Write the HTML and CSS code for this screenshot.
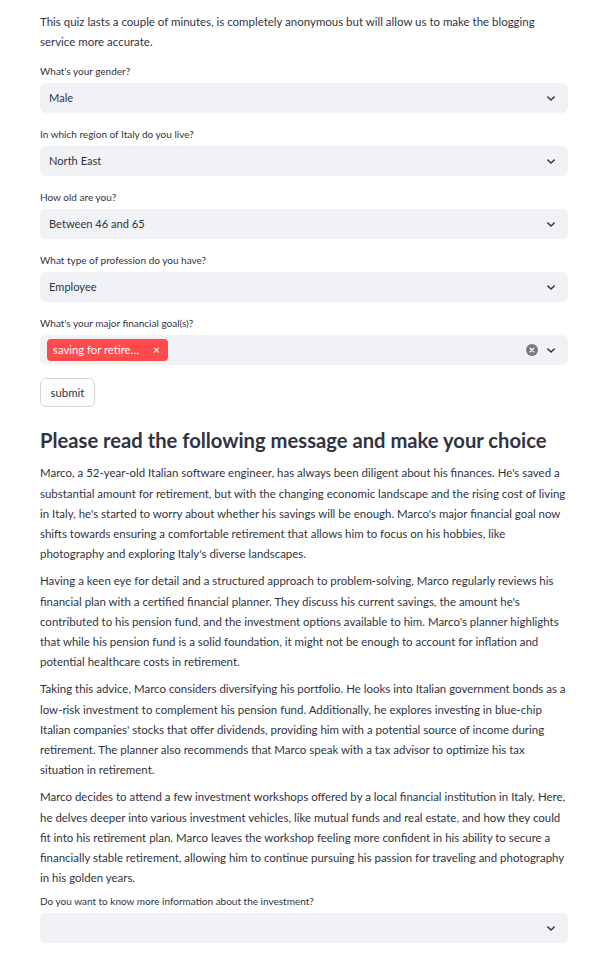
FILE: index.html
```html
<!DOCTYPE html>
<html lang="en">
<head>
<meta charset="utf-8">
<title>Quiz</title>
<link rel="stylesheet" href="styles.css">
</head>
<body>
<main class="page">
  <p class="intro">This quiz lasts a couple of minutes, is completely anonymous but will allow us to make the blogging service more accurate.</p>

  <div class="field">
    <label class="label">What's your gender?</label>
    <div class="select"><span class="value">Male</span><span class="icons"><svg class="chev" viewBox="0 0 10 6"><path d="M1 1l4 4 4-4"/></svg></span></div>
  </div>

  <div class="field">
    <label class="label">In which region of Italy do you live?</label>
    <div class="select"><span class="value">North East</span><span class="icons"><svg class="chev" viewBox="0 0 10 6"><path d="M1 1l4 4 4-4"/></svg></span></div>
  </div>

  <div class="field">
    <label class="label">How old are you?</label>
    <div class="select"><span class="value">Between 46 and 65</span><span class="icons"><svg class="chev" viewBox="0 0 10 6"><path d="M1 1l4 4 4-4"/></svg></span></div>
  </div>

  <div class="field">
    <label class="label">What type of profession do you have?</label>
    <div class="select"><span class="value">Employee</span><span class="icons"><svg class="chev" viewBox="0 0 10 6"><path d="M1 1l4 4 4-4"/></svg></span></div>
  </div>

  <div class="field">
    <label class="label">What's your major financial goal(s)?</label>
    <div class="select multi">
      <span class="tag"><span class="tag-text">saving for retire…</span><span class="tag-x">×</span></span>
      <span class="icons">
        <svg class="clear" viewBox="0 0 12 12"><circle cx="6" cy="6" r="6"/><path d="M4.2 4.2l3.6 3.6M7.8 4.2l-3.6 3.6"/></svg>
        <svg class="chev" viewBox="0 0 10 6"><path d="M1 1l4 4 4-4"/></svg>
      </span>
    </div>
  </div>

  <button class="btn">submit</button>

  <h3 class="heading">Please read the following message and make your choice</h3>

  <p class="para">Marco, a 52-year-old Italian software engineer, has always been diligent about his finances. He's saved a substantial amount for retirement, but with the changing economic landscape and the rising cost of living in Italy, he's started to worry about whether his savings will be enough. Marco's major financial goal now shifts towards ensuring a comfortable retirement that allows him to focus on his hobbies, like photography and exploring Italy's diverse landscapes.</p>

  <p class="para">Having a keen eye for detail and a structured approach to problem-solving, Marco regularly reviews his financial plan with a certified financial planner. They discuss his current savings, the amount he's contributed to his pension fund, and the investment options available to him. Marco's planner highlights that while his pension fund is a solid foundation, it might not be enough to account for inflation and potential healthcare costs in retirement.</p>

  <p class="para">Taking this advice, Marco considers diversifying his portfolio. He looks into Italian government bonds as a low-risk investment to complement his pension fund. Additionally, he explores investing in blue-chip Italian companies' stocks that offer dividends, providing him with a potential source of income during retirement. The planner also recommends that Marco speak with a tax advisor to optimize his tax situation in retirement.</p>

  <p class="para final">Marco decides to attend a few investment workshops offered by a local financial institution in Italy. Here, he delves deeper into various investment vehicles, like mutual funds and real estate, and how they could fit into his retirement plan. Marco leaves the workshop feeling more confident in his ability to secure a financially stable retirement, allowing him to continue pursuing his passion for traveling and photography in his golden years.</p>

  <div class="field">
    <label class="label">Do you want to know more information about the investment?</label>
    <div class="select"><span class="value"></span><span class="icons"><svg class="chev" viewBox="0 0 10 6"><path d="M1 1l4 4 4-4"/></svg></span></div>
  </div>
</main>
</body>
</html>
```

FILE: styles.css
```css
html, body {
  margin: 0;
  padding: 0;
  background: #ffffff;
}

body {
  font-family: Lato, "Noto Sans", sans-serif;
  color: #31333f;
  font-size: 11.48px;
  line-height: 20.2px;
}

.page {
  width: 528px;
  margin-left: 40px;
  padding-top: 12px;
  display: flex;
  flex-direction: column;
  align-items: stretch;
}

.intro {
  margin: 0 0 10px 0;
}

.field {
  display: flex;
  flex-direction: column;
  margin-bottom: 12px;
}

.label {
  font-size: 10px;
  line-height: 18px;
  margin-bottom: 3px;
}

.select {
  height: 30px;
  background: #f0f2f6;
  border-radius: 6px;
  display: flex;
  align-items: center;
  padding: 0 9px;
  box-sizing: border-box;
}

.value {
  flex: 1;
  font-size: 11.1px;
}

.icons {
  display: flex;
  align-items: center;
  gap: 9px;
  margin-left: auto;
  padding-right: 4px;
}

.chev {
  width: 8px;
  height: 5px;
  fill: none;
  stroke: #31333f;
  stroke-width: 1.8;
  stroke-linecap: round;
  stroke-linejoin: round;
}

.clear {
  width: 12px;
  height: 12px;
}

.clear circle {
  fill: #777983;
}

.clear path {
  stroke: #f0f2f6;
  stroke-width: 1.5;
  stroke-linecap: round;
}

.multi {
  padding-left: 7px;
}

.tag {
  background: #ff4b4b;
  color: #ffffff;
  border-radius: 4px;
  height: 22px;
  width: 121px;
  box-sizing: border-box;
  padding: 0 6px 0 6px;
  display: flex;
  align-items: center;
  justify-content: space-between;
  font-size: 11.3px;
}

.tag-x {
  font-size: 12px;
  margin-right: 2px;
}

.btn {
  align-self: flex-start;
  width: 55px;
  height: 29px;
  margin: 1px 0 0 0;
  background: #ffffff;
  border: 1px solid #d5d6da;
  border-radius: 6px;
  font-family: inherit;
  font-size: 11.4px;
  color: #31333f;
  padding: 0;
}

.heading {
  font-size: 20.2px;
  line-height: 24px;
  font-weight: 700;
  margin: 21px 0 11px 0;
}

.para {
  margin: 0 0 7px 0;
}

.para.final {
  margin-bottom: 4px;
}
```
